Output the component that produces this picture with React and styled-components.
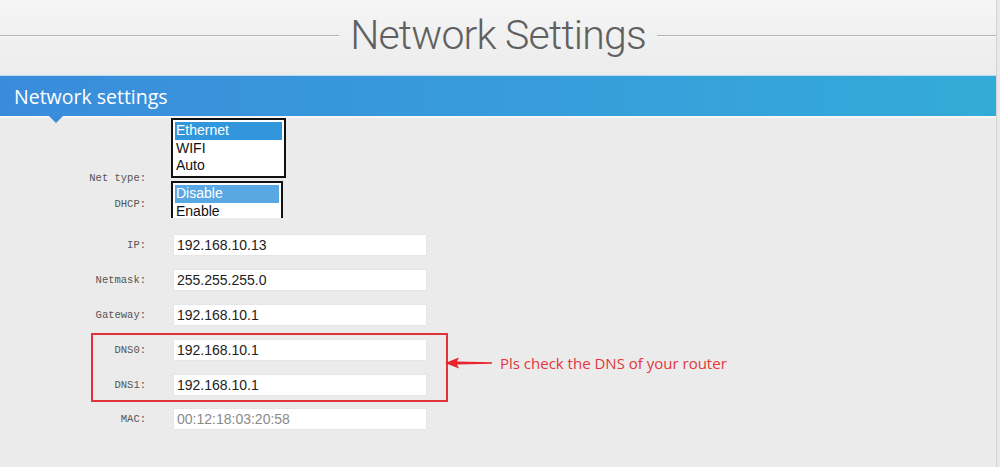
import React from 'react'
import styled, { createGlobalStyle } from 'styled-components'

const GlobalStyle = createGlobalStyle`
  html, body {
    margin: 0;
    padding: 0;
    background: #e9e9e9;
  }
  * {
    box-sizing: border-box;
  }
`

const Page = styled.div`
  width: 997px;
  height: 467px;
  overflow: hidden;
  background: #ebebeb;
  border-right: 1px solid #d2d2d2;
`

const Header = styled.header`
  height: 75px;
  padding-top: 12px;
  background: linear-gradient(180deg, #f5f5f5 0%, #ececec 100%);
`

const TitleRow = styled.div`
  display: flex;
  align-items: center;
  gap: 11px;
`

const Rule = styled.div`
  flex: 1;
  height: 2px;
  margin-top: 2px;
  background: #b4b4b4;
  border-bottom: 1px solid #f8f8f8;
`

const Title = styled.h1`
  margin: 0;
  font-family: Roboto, 'Liberation Sans', sans-serif;
  font-weight: 300;
  font-size: 41px;
  line-height: 46px;
  letter-spacing: -0.8px;
  color: #606060;
`

const Bar = styled.div`
  position: relative;
  height: 41px;
  display: flex;
  align-items: center;
  padding-left: 14px;
  border-top: 1px solid #b9dcf3;
  background: linear-gradient(90deg, #3a8cdb 0%, #379cdb 50%, #33abd8 100%);
  font-family: 'Open Sans', 'Noto Sans', sans-serif;
  font-size: 19.5px;
  color: #fff;

  &::after {
    content: '';
    position: absolute;
    left: 49px;
    bottom: -7px;
    border-left: 7px solid transparent;
    border-right: 7px solid transparent;
    border-top: 7px solid #3a8cdb;
  }
`

const Strip = styled.div`
  height: 2px;
  background: #f6f6f6;
`

const Form = styled.div`
  display: flex;
  flex-direction: column;
`

const Row = styled.div`
  display: flex;
  align-items: ${p => (p.$top ? 'flex-start' : 'center')};
  gap: 27px;
  height: ${p => (p.$h ? `${p.$h}px` : 'auto')};
  margin-top: ${p => p.$mt || 0}px;
`

const Label = styled.label`
  width: ${p => p.$w || 146}px;
  flex: none;
  padding-top: ${p => p.$pt || 0}px;
  text-align: right;
  font-family: 'Liberation Mono', 'DejaVu Sans Mono', monospace;
  font-size: 10.5px;
  line-height: 14px;
  color: #555;
`

const ListBox = styled.div`
  width: ${p => p.$w}px;
  height: ${p => p.$h}px;
  margin-left: -2px;
  padding: 2px 2px 0;
  overflow: hidden;
  background: #fff;
  border: 2px solid #111;
  border-bottom: ${p => (p.$open ? 'none' : '2px solid #111')};
`

const Option = styled.div`
  height: 17.5px;
  padding-left: 1px;
  font-family: 'Liberation Sans', Arial, sans-serif;
  font-size: 14px;
  line-height: 17px;
  color: ${p => (p.$sel ? '#fff' : '#111')};
  background: ${p => (p.$sel ? p.$sel : 'transparent')};
`

const TextBox = styled.div`
  width: 254px;
  height: 22px;
  padding-left: 3px;
  background: #fff;
  border: 1px solid #e6e6e6;
  font-family: 'Liberation Sans', Arial, sans-serif;
  font-size: 14px;
  line-height: 20px;
  color: ${p => (p.$muted ? '#8a8a8a' : '#222')};
`

const GroupLine = styled.div`
  display: flex;
  align-items: flex-start;
  margin-top: 7px;
`

const Group = styled.div`
  width: 357px;
  margin-left: 91px;
  padding: 4px 0;
  border: 2px solid #e2333b;
  display: flex;
  flex-direction: column;
`

const Callout = styled.div`
  display: flex;
  align-items: center;
  gap: 8px;
  margin-top: 20px;
  margin-left: -3px;
`

const Note = styled.span`
  font-family: 'Open Sans', 'Noto Sans', sans-serif;
  font-size: 15px;
  color: #e4363c;
`

const Arrow = () => (
  <svg width='47' height='12' viewBox='0 0 47 12'>
    <polygon
      points='0,6 14,0.6 12,4.5 47,5.2 47,6.8 12,7.5 14,11.4'
      fill='#e8252c'
    />
  </svg>
)

const Field = ({ label, value, mt, w, muted }) => (
  <Row $mt={mt}>
    <Label $w={w}>{label}</Label>
    <TextBox $muted={muted}>{value}</TextBox>
  </Row>
)

export default function App() {
  return (
    <>
      <GlobalStyle />
      <Page>
        <Header>
          <TitleRow>
            <Rule />
            <Title>Network Settings</Title>
            <Rule />
          </TitleRow>
        </Header>
        <Bar>Network settings</Bar>
        <Strip />
        <Form>
          <Row $top $h={60}>
            <Label $pt={53}>Net type:</Label>
            <ListBox $w={115} $h={60}>
              <Option $sel='#3196dc'>Ethernet</Option>
              <Option>WIFI</Option>
              <Option>Auto</Option>
            </ListBox>
          </Row>
          <Row $top $h={37} $mt={3}>
            <Label $pt={16}>DHCP:</Label>
            <ListBox $w={112} $h={37} $open>
              <Option $sel='#5aa8e3'>Disable</Option>
              <Option>Enable</Option>
            </ListBox>
          </Row>
          <Field label='IP:' value='192.168.10.13' mt={16} />
          <Field label='Netmask:' value='255.255.255.0' mt={13} />
          <Field label='Gateway:' value='192.168.10.1' mt={13} />
          <GroupLine>
            <Group>
              <Field label='DNS0:' value='192.168.10.1' w={53} />
              <Field label='DNS1:' value='192.168.10.1' w={53} mt={13} />
            </Group>
            <Callout>
              <Arrow />
              <Note>Pls check the DNS of your router</Note>
            </Callout>
          </GroupLine>
          <Field label='MAC:' value='00:12:18:03:20:58' mt={6} muted />
        </Form>
      </Page>
    </>
  )
}
